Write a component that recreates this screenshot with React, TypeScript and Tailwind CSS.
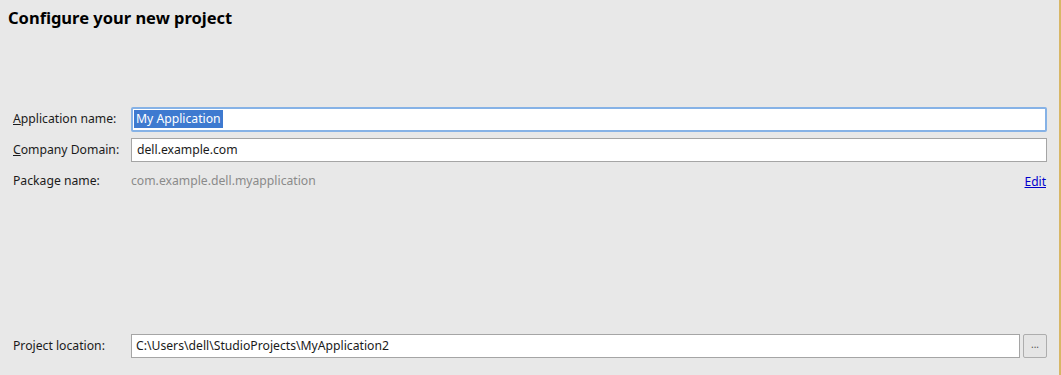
export default function App() {
  return (
    <div className="flex h-[375px] w-[1061px] bg-[#e8e8e8] text-[12.2px] text-[#1a1a1a] [font-family:'Noto_Sans',sans-serif]">
      <div className="flex flex-1 flex-col pl-[8px] pr-[12px]">
        <h1 className="mt-[5px] text-[16.5px] font-bold leading-[26px] text-black">Configure your new project</h1>

        <div className="mt-[75px] flex flex-col pl-[5px]">
          <div className="flex h-[26px] items-center">
            <label className="w-[118px] shrink-0">
              <span className="underline">A</span>pplication name:
            </label>
            <div className="flex h-[25px] flex-1 items-center rounded-[2px] border-2 border-[#86b2e6] bg-white px-[1px]">
              <span className="bg-[#3e7ad0] px-[2px] leading-[18px] text-white">My Application</span>
            </div>
          </div>

          <div className="mt-[6px] flex h-[24px] items-center">
            <label className="w-[118px] shrink-0">
              <span className="underline">C</span>ompany Domain:
            </label>
            <div className="flex h-[24px] flex-1 items-center border border-[#a5a5a5] bg-white px-[5px]">
              dell.example.com
            </div>
          </div>

          <div className="mt-[6px] flex h-[27px] items-center">
            <span className="w-[118px] shrink-0">Package name:</span>
            <span className="flex-1 text-[#8a8a8a]">com.example.dell.myapplication</span>
            <a href="#" className="mr-[1px] text-[12px] text-[#0000cc] underline">Edit</a>
          </div>
        </div>

        <div className="mt-[139px] flex h-[24px] items-center pl-[5px]">
          <span className="w-[118px] shrink-0">Project location:</span>
          <div className="flex h-[24px] flex-1 items-center border border-[#a5a5a5] bg-white px-[4px]">
            C:\Users\dell\StudioProjects\MyApplication2
          </div>
          <button className="ml-[3px] flex h-[24px] w-[24px] items-center justify-center rounded-[2px] border border-[#adadad] bg-[#e5e5e5] pb-[4px] text-[10px] text-[#555]">
            ...
          </button>
        </div>
      </div>
      <div className="w-[2px] bg-[#d8b766]" />
    </div>
  )
}
